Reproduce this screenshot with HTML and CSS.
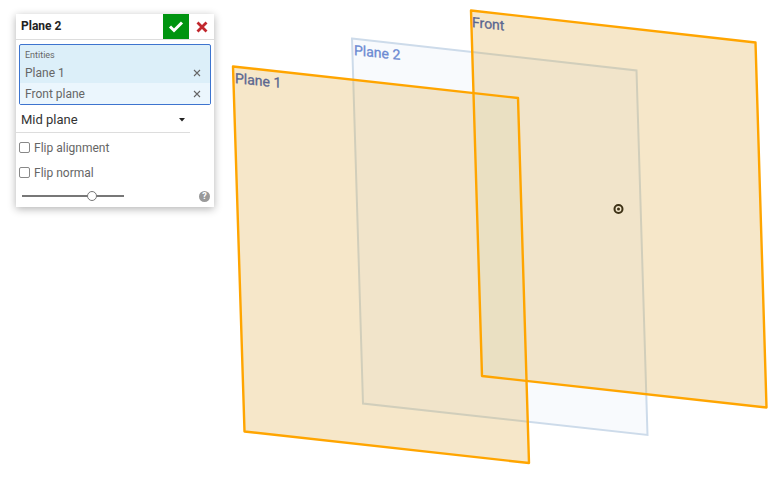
FILE: index.html
```html
<!DOCTYPE html>
<html lang="en">
<head>
<meta charset="utf-8">
<meta name="viewport" content="width=device-width, initial-scale=1">
<title>Plane 2</title>
<link rel="stylesheet" href="styles.css">
</head>
<body>
<main class="workspace">
  <svg class="scene" viewBox="0 0 779 479" role="img" aria-label="Plane 1, Plane 2 and Front planes">
    <defs>
      <polygon id="plane1" points="233,66.5 518,98 529,463 244.5,431.5"/>
      <polygon id="plane2" points="352,38.5 636.5,70.5 647.5,435 363,403.5"/>
      <polygon id="front" points="471,10.5 755.5,42.5 766.5,407.5 482,376"/>
      <clipPath id="selected"><use href="#plane1"/><use href="#front"/></clipPath>
      <clipPath id="inFront"><use href="#front"/></clipPath>
    </defs>
    <use href="#plane2" class="result"/>
    <use href="#plane1" class="pick-fill"/>
    <use href="#front" class="pick-fill"/>
    <g clip-path="url(#selected)"><use href="#plane2" class="result-covered"/></g>
    <g clip-path="url(#inFront)"><use href="#plane1" class="pick-overlap"/></g>
    <use href="#plane1" class="pick-edge"/>
    <use href="#front" class="pick-edge"/>
    <text class="label" transform="translate(235 83) skewY(6)">Plane 1</text>
    <text class="label label-result" transform="translate(354 55) skewY(6)">Plane 2</text>
    <text class="label" transform="translate(472 27) skewY(6)">Front</text>
    <circle class="origin-ring" cx="618.5" cy="209" r="4"/>
    <circle class="origin-dot" cx="618.5" cy="209" r="1.5"/>
  </svg>

  <form class="panel">
    <header class="panel-head">
      <h1 class="title">Plane 2</h1>
      <button class="accept" type="button" aria-label="Accept">
        <svg width="16" height="14" viewBox="0 0 16 14"><path d="M2 6.5 6 10.5 14 2.5" fill="none" stroke="#fff" stroke-width="3"/></svg>
      </button>
      <button class="cancel" type="button" aria-label="Cancel">
        <svg width="12" height="12" viewBox="0 0 12 12"><path d="M1.5 1.5 10.5 10.5M10.5 1.5 1.5 10.5" fill="none" stroke="#c1272d" stroke-width="2.8"/></svg>
      </button>
    </header>
    <section class="entities">
      <h2 class="caption">Entities</h2>
      <ul class="list">
        <li class="item"><span>Plane 1</span><button class="remove" type="button" aria-label="Remove Plane 1"><svg width="8" height="8" viewBox="0 0 8 8"><path d="M1 1 7 7M7 1 1 7" stroke="#666" stroke-width="1.1"/></svg></button></li>
        <li class="item item-light"><span>Front plane</span><button class="remove" type="button" aria-label="Remove Front plane"><svg width="8" height="8" viewBox="0 0 8 8"><path d="M1 1 7 7M7 1 1 7" stroke="#666" stroke-width="1.1"/></svg></button></li>
      </ul>
    </section>
    <div class="type">
      <select class="select" aria-label="Plane type"><option>Mid plane</option></select>
      <svg class="caret" width="6" height="4" viewBox="0 0 6 4"><path d="M0 0H6L3 3.5Z" fill="#222"/></svg>
    </div>
    <label class="check"><input type="checkbox">Flip alignment</label>
    <label class="check"><input type="checkbox">Flip normal</label>
    <footer class="panel-foot">
      <input class="slider" type="range" min="0" max="100" value="71" aria-label="Opacity">
      <button class="help" type="button" aria-label="Help">?</button>
    </footer>
  </form>
</main>
</body>
</html>
```

FILE: styles.css
```css
* { box-sizing: border-box; }
body {
  margin: 0;
  background: #fff;
  font: 12px/22px Roboto, "Liberation Sans", sans-serif;
  color: #666;
}
button { margin: 0; padding: 0; border: 0; background: none; font: inherit; }
h1, h2, ul { margin: 0; padding: 0; list-style: none; }
svg { display: block; }

.workspace { display: grid; }
.scene, .panel { grid-area: 1 / 1; }
.scene { width: 100%; }
.result { fill: #f8fafd; stroke: #cddbea; stroke-width: 2; }
.result-covered { fill: #f1e4ca; stroke: #d1cebb; stroke-width: 2; }
.pick-fill { fill: #f6e7c9; }
.pick-overlap { fill: #eae0c2; }
.pick-edge { fill: none; stroke: #ffa500; stroke-width: 2.4; stroke-linejoin: round; }
.label { font-size: 14px; fill: #5a6690; stroke: #5a6690; stroke-width: 0.3; }
.label-result { fill: #6c8ad2; stroke: #6c8ad2; }
.origin-ring { fill: none; stroke: #3e3216; stroke-width: 2; }
.origin-dot { fill: #3e3216; }

.panel {
  align-self: start;
  width: 198px;
  margin: 14px 16px;
  background: #fff;
  box-shadow: 0 2px 8px rgba(0, 0, 0, 0.3);
}
.panel-head { display: flex; height: 26px; border-bottom: 1px solid #ddd; }
.title { flex: 1; padding-left: 5px; font-size: 12px; line-height: 25px; font-weight: 700; color: #222; }
.accept, .cancel { display: grid; place-items: center; width: 26px; height: 25px; }
.cancel { width: 25px; }
.accept { background: #009410; }
.entities {
  margin: 4px 3px 0;
  padding-top: 4px;
  border: 1px solid #3d74cf;
  border-radius: 2px;
  background: #dceff9;
}
.caption { padding-left: 5px; font-size: 9px; line-height: 13px; font-weight: 400; }
.item { display: flex; align-items: center; justify-content: space-between; height: 21px; padding: 0 9px 0 5px; }
.item-light { background: #ebf6fd; }
.remove { display: grid; place-items: center; }
.type {
  display: flex;
  align-items: center;
  width: 174px;
  height: 26px;
  margin-top: 2px;
  padding: 0 5px;
  border-bottom: 1px solid #ddd;
}
.select { flex: 1; appearance: none; padding: 0; border: 0; background: none; font: inherit; font-size: 13px; color: #333; }
.check { display: flex; align-items: center; gap: 4px; height: 25px; padding-left: 3px; margin-top: 2px; }
.check + .check { margin-top: 0; }
.check input { appearance: none; width: 11px; height: 11px; margin: 0; border: 1px solid #888; border-radius: 2px; background: #fff; }
.panel-foot { display: flex; align-items: center; justify-content: space-between; height: 22px; padding: 0 4px 0 6px; }
.slider { appearance: none; width: 102px; height: 12px; margin: 0; background: none; }
.slider::-webkit-slider-runnable-track { height: 2px; background: #777; }
.slider::-webkit-slider-thumb {
  appearance: none;
  width: 10px;
  height: 10px;
  margin-top: -4px;
  border: 1px solid #777;
  border-radius: 50%;
  background: #fff;
}
.help { width: 11px; height: 11px; border-radius: 50%; background: #999; color: #fff; font-size: 9px; line-height: 11px; font-weight: 700; }
```
